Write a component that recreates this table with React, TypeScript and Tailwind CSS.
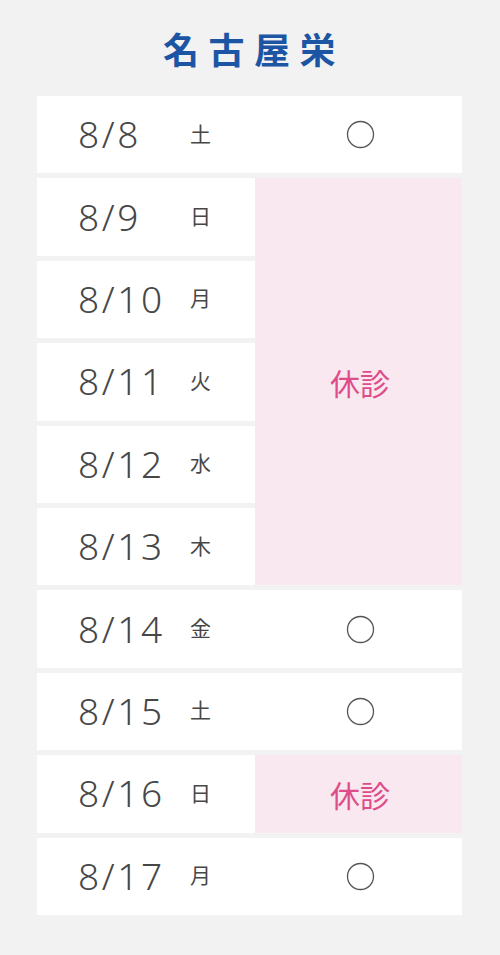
import React from 'react';

type Day = { date: string; wd: string; open: boolean };

const days: Day[] = [
  { date: '8/8', wd: '土', open: true },
  { date: '8/9', wd: '日', open: false },
  { date: '8/10', wd: '月', open: false },
  { date: '8/11', wd: '火', open: false },
  { date: '8/12', wd: '水', open: false },
  { date: '8/13', wd: '木', open: false },
  { date: '8/14', wd: '金', open: true },
  { date: '8/15', wd: '土', open: true },
  { date: '8/16', wd: '日', open: false },
  { date: '8/17', wd: '月', open: true },
];

const font = { fontFamily: '"Noto Sans CJK JP", "Noto Sans", sans-serif' };
const numFont = { fontFamily: '"Noto Sans", "Noto Sans CJK JP", sans-serif' };

const Circle = () => (
  <svg width="29" height="29" viewBox="0 0 29 29">
    <circle cx="14.5" cy="14.5" r="13" fill="none" stroke="#555" strokeWidth="1.3" />
  </svg>
);

const Closed = () => (
  <span className="text-[30px] text-[#de4c8a] leading-none">休診</span>
);

export default function App() {
  return (
    <div className="w-[500px] h-[955px] bg-[#f2f2f2]" style={font}>
      <h1 className="h-[96px] flex items-center justify-center pl-[8px] text-[36px] font-bold tracking-[9.5px] text-[#1d55a5]">
        名古屋栄
      </h1>
      <div className="mx-[37px] grid grid-cols-[218px_207px] auto-rows-[77.4px] gap-y-[5px]">
        {days.map((d, i) => (
          <React.Fragment key={d.date}>
            <div className="bg-white flex items-center pl-[41px] text-[#474747]">
              <span
                className="w-[112px] text-[37px] font-[350] tracking-[2.6px] leading-none -mt-[2px]"
                style={numFont}
              >
                {d.date}
              </span>
              <span className="text-[21px] leading-none -mt-[3px]">{d.wd}</span>
            </div>
            {d.open && (
              <div className="bg-white flex items-center justify-center pl-[3px]">
                <Circle />
              </div>
            )}
            {i === 1 && (
              <div className="row-span-5 bg-[#f9e8ef] flex items-center justify-center pl-[3px]">
                <Closed />
              </div>
            )}
            {i === 8 && (
              <div className="bg-[#f9e8ef] flex items-center justify-center pl-[3px]">
                <Closed />
              </div>
            )}
          </React.Fragment>
        ))}
      </div>
    </div>
  );
}
